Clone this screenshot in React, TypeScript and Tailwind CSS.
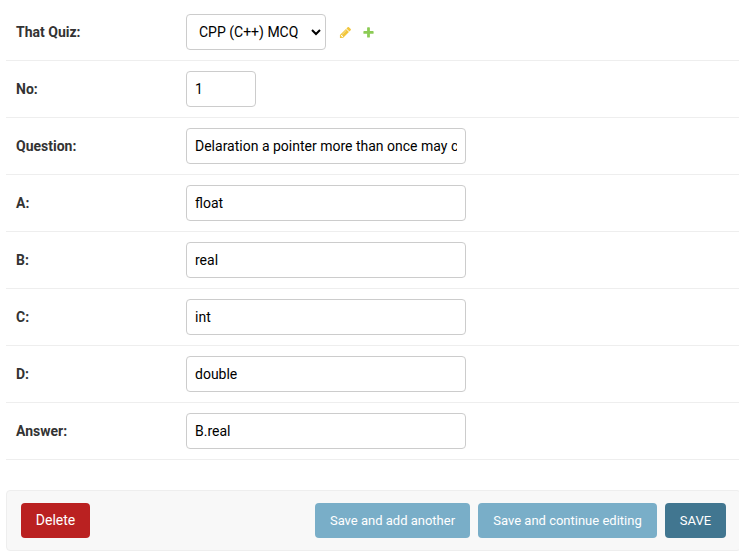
import React from "react";

const fieldClass =
  "h-9 rounded border border-[#ccc] bg-white px-2 text-sm text-black outline-none";

function Row({ label, children }: { label: string; children: React.ReactNode }) {
  return (
    <div className="flex h-[57px] items-center border-b border-[#eee] pl-2.5">
      <label className="w-[170px] shrink-0 text-sm font-bold text-[#333]">{label}</label>
      {children}
    </div>
  );
}

function PencilIcon() {
  return (
    <svg className="ml-[13px] size-[13px] opacity-80" viewBox="0 0 1792 1792" fill="#efb80b">
      <path d="M491 1536l91-91-235-235-91 91v107h128v128h107zm523-928q0-22-22-22-10 0-17 7l-542 542q-7 7-7 17 0 22 22 22 10 0 17-7l542-542q7-7 7-17zm-54-192l416 416-832 832h-416v-416zm683 96q0 53-37 90l-166 166-416-416 166-165q36-38 90-38 53 0 91 38l235 234q37 39 37 91z" />
    </svg>
  );
}

function PlusIcon() {
  return (
    <svg className="ml-2.5 size-[13px] opacity-80" viewBox="0 0 1792 1792" fill="#70bf2b">
      <path d="M1600 796v192q0 40-28 68t-68 28h-416v416q0 40-28 68t-68 28h-192q-40 0-68-28t-28-68v-416h-416q-40 0-68-28t-28-68v-192q0-40 28-68t68-28h416v-416q0-40 28-68t68-28h192q40 0 68 28t28 68v416h416q40 0 68 28t28 68z" />
    </svg>
  );
}

const textFields = [
  { label: "Question:", value: "Delaration a pointer more than once may cause ____" },
  { label: "A:", value: "float" },
  { label: "B:", value: "real" },
  { label: "C:", value: "int" },
  { label: "D:", value: "double" },
  { label: "Answer:", value: "B.real" },
];

export default function App() {
  return (
    <div className="h-[554px] w-full overflow-hidden bg-white pl-1.5 pt-1 font-['Roboto',sans-serif]">
      <form className="w-[735px]">
        <Row label="That Quiz:">
          <div className="flex h-9 w-[140px] rounded border border-[#ccc] bg-white">
            <select className="w-[137px] rounded bg-transparent px-2 text-sm text-black outline-none" defaultValue="cpp">
              <option value="cpp">CPP (C++) MCQ</option>
            </select>
          </div>
          <PencilIcon />
          <PlusIcon />
        </Row>
        <Row label="No:">
          <input className={`${fieldClass} w-[70px]`} defaultValue="1" />
        </Row>
        {textFields.map((f) => (
          <Row key={f.label} label={f.label}>
            <input className={`${fieldClass} w-[280px]`} defaultValue={f.value} />
          </Row>
        ))}
        <div className="mt-[30px] flex h-[61px] items-center gap-2 rounded border border-[#eee] bg-[#f8f8f8] px-3.5 text-[13px] text-white">
          <button type="button" className="mr-auto h-[35px] w-[69px] rounded bg-[#ba2121] pb-0.5 text-sm">
            Delete
          </button>
          <button type="button" className="h-[35px] w-[155px] rounded bg-[#79aec8]">
            Save and add another
          </button>
          <button type="button" className="h-[35px] w-[179px] rounded bg-[#79aec8]">
            Save and continue editing
          </button>
          <button type="button" className="h-[35px] w-[61px] rounded bg-[#417690]">
            SAVE
          </button>
        </div>
      </form>
    </div>
  );
}
